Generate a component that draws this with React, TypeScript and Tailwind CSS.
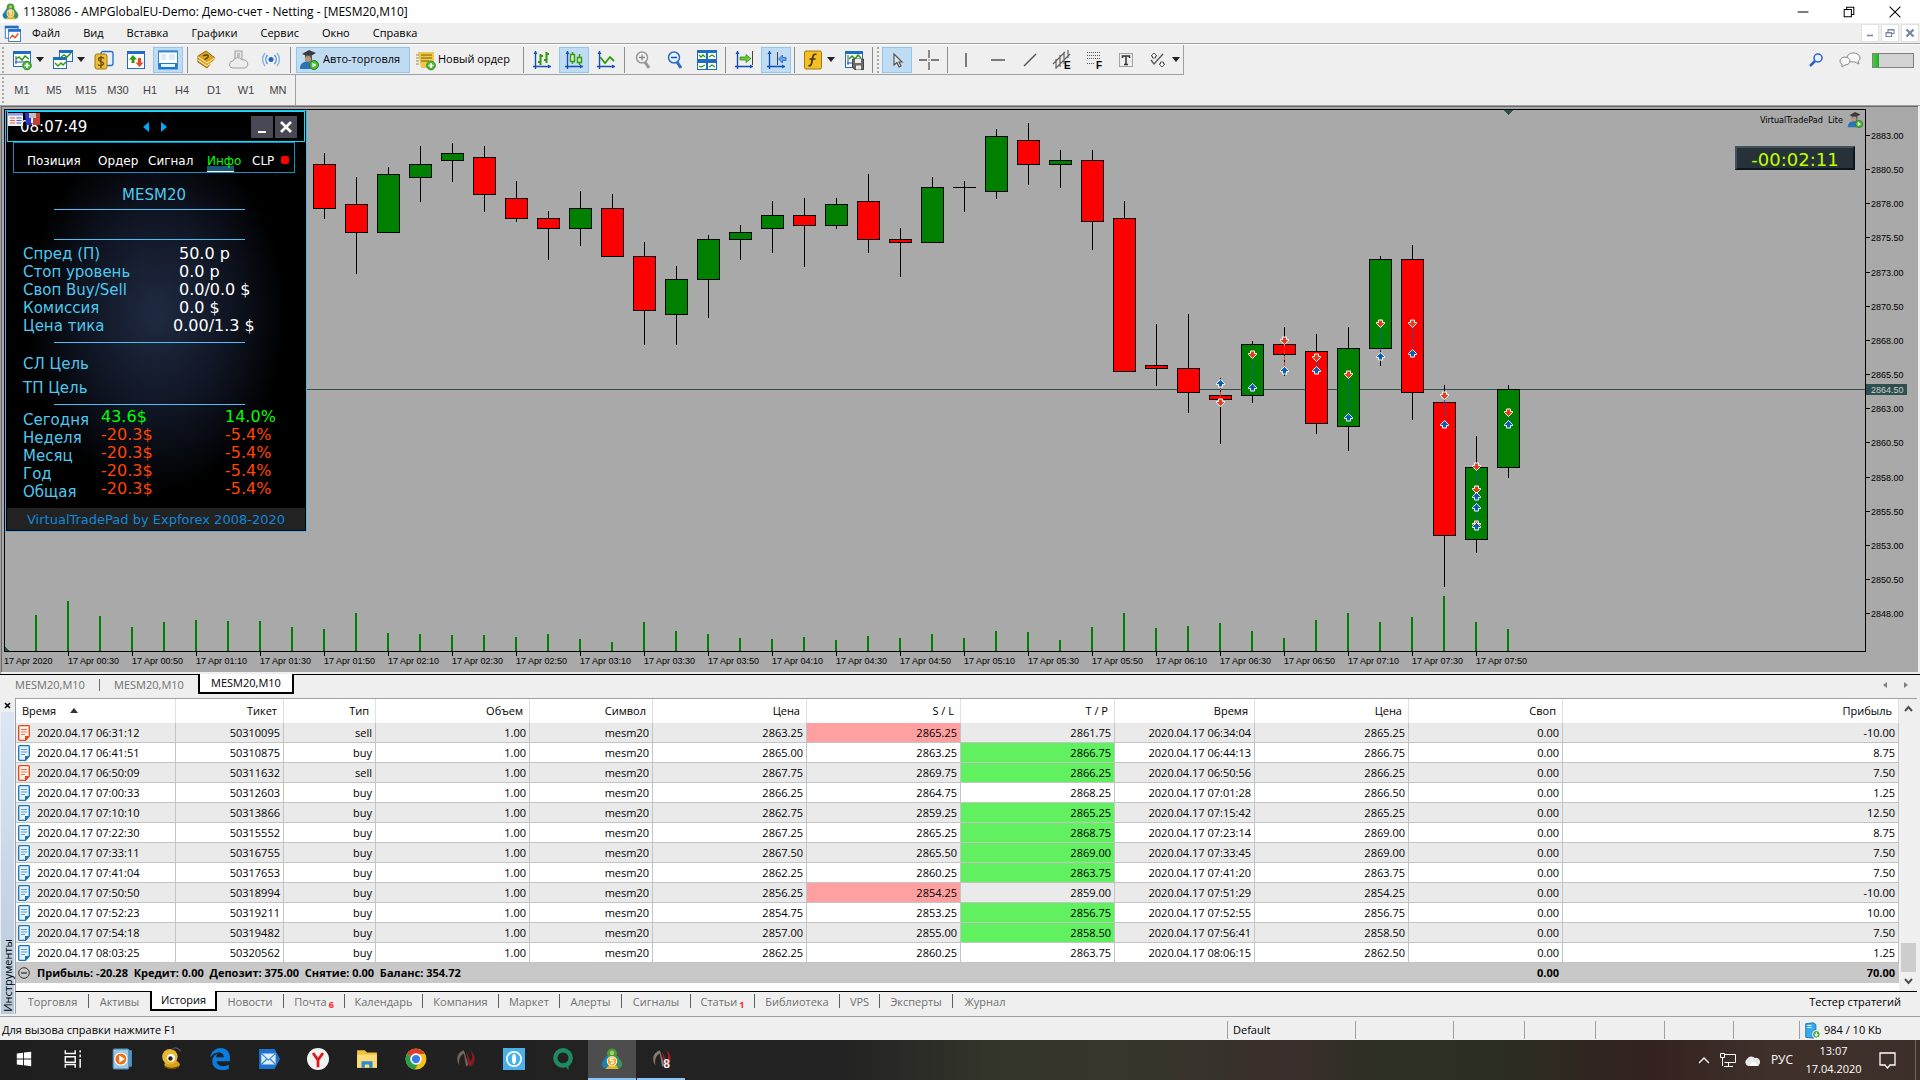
import React, { useState } from 'react';

type Candle = [number, number, number, number, 'r' | 'g'];

const FIRST_X = 324;
const STEP = 32;

// high, top, bottom, low, colour
const candles: Candle[] = [
  [153, 164, 209, 219, 'r'], [177, 204, 233, 274, 'r'], [167, 174, 233, 233, 'g'], [146, 164, 178, 202, 'g'],
  [143, 153, 161, 182, 'g'], [146, 157, 195, 212, 'r'], [181, 198, 219, 222, 'r'], [211, 218, 229, 260, 'r'],
  [191, 208, 229, 246, 'g'], [194, 208, 257, 257, 'r'], [242, 256, 311, 345, 'r'], [266, 279, 315, 345, 'g'],
  [235, 239, 280, 318, 'g'], [225, 232, 240, 260, 'g'], [201, 215, 229, 253, 'g'], [198, 215, 226, 267, 'r'],
  [198, 204, 226, 229, 'g'], [174, 201, 240, 253, 'r'], [228, 239, 243, 277, 'r'], [177, 187, 243, 243, 'g'],
  [181, 187, 188, 212, 'g'], [129, 136, 192, 199, 'g'], [123, 140, 165, 185, 'r'], [150, 160, 165, 188, 'g'],
  [150, 160, 222, 250, 'r'], [201, 218, 372, 372, 'r'], [324, 365, 369, 386, 'r'], [314, 368, 393, 413, 'r'],
  [378, 395, 400, 444, 'r'], [341, 344, 396, 403, 'g'], [327, 344, 355, 376, 'r'], [334, 351, 424, 434, 'r'],
  [327, 348, 427, 451, 'g'], [256, 259, 349, 366, 'g'], [245, 259, 393, 420, 'r'], [385, 402, 536, 587, 'r'],
  [436, 467, 540, 553, 'g'], [385, 389, 468, 478, 'g'],
];

const volumes = [
  615, 601, 616, 627, 622, 620, 621, 621, 627, 629, 613, 633, 634, 635, 635, 637, 634, 639, 642, 622, 631, 634, 638,
  639, 637, 640, 636, 638, 634, 638, 631, 632, 640, 627, 613, 628, 626, 623, 631, 638, 620, 613, 622, 617, 596, 622, 629,
];

// x, y, s = sell arrow (down), b = buy arrow (up)
const arrows: [number, number, 's' | 'b'][] = [
  [1220, 383, 'b'], [1220, 402, 's'], [1252, 354, 's'], [1252, 387, 'b'], [1284, 340, 's'], [1284, 370, 'b'],
  [1316, 357, 's'], [1316, 370, 'b'], [1348, 374, 's'], [1348, 417, 'b'], [1380, 323, 's'], [1380, 356, 'b'],
  [1412, 323, 's'], [1412, 353, 'b'], [1444, 395, 's'], [1444, 424, 'b'], [1476, 466, 's'], [1476, 489, 's'],
  [1476, 496, 'b'], [1476, 507, 'b'], [1476, 524, 's'], [1476, 526, 'b'], [1508, 412, 's'], [1508, 424, 'b'],
];

const links: [number, number, number, string][] = [
  [1220, 380, 407, '#e8481c'], [1252, 360, 382, '#0a5fb4'], [1284, 344, 366, '#e8481c'], [1316, 362, 366, '#0a5fb4'],
  [1348, 380, 412, '#0a5fb4'], [1380, 330, 351, '#0a5fb4'], [1412, 328, 348, '#0a5fb4'], [1444, 399, 419, '#0a5fb4'],
  [1476, 471, 522, '#0a5fb4'], [1508, 416, 419, '#0a5fb4'],
];

const timeLabels = Array.from({ length: 23 }, (_, i) => {
  const m = 30 + i * 20;
  return `17 Apr ${String(Math.floor(m / 60)).padStart(2, '0')}:${String(m % 60).padStart(2, '0')}`;
});

const deals = [
  ['2020.04.17 06:31:12', '50310095', 'sell', '2863.25', '2865.25', '2861.75', '2020.04.17 06:34:04', '2865.25', '-10.00', 'sl'],
  ['2020.04.17 06:41:51', '50310875', 'buy', '2865.00', '2863.25', '2866.75', '2020.04.17 06:44:13', '2866.75', '8.75', 'tp'],
  ['2020.04.17 06:50:09', '50311632', 'sell', '2867.75', '2869.75', '2866.25', '2020.04.17 06:50:56', '2866.25', '7.50', 'tp'],
  ['2020.04.17 07:00:33', '50312603', 'buy', '2866.25', '2864.75', '2868.25', '2020.04.17 07:01:28', '2866.50', '1.25', ''],
  ['2020.04.17 07:10:10', '50313866', 'buy', '2862.75', '2859.25', '2865.25', '2020.04.17 07:15:42', '2865.25', '12.50', 'tp'],
  ['2020.04.17 07:22:30', '50315552', 'buy', '2867.25', '2865.25', '2868.75', '2020.04.17 07:23:14', '2869.00', '8.75', 'tp'],
  ['2020.04.17 07:33:11', '50316755', 'buy', '2867.50', '2865.50', '2869.00', '2020.04.17 07:33:45', '2869.00', '7.50', 'tp'],
  ['2020.04.17 07:41:04', '50317653', 'buy', '2862.25', '2860.25', '2863.75', '2020.04.17 07:41:20', '2863.75', '7.50', 'tp'],
  ['2020.04.17 07:50:50', '50318994', 'buy', '2856.25', '2854.25', '2859.00', '2020.04.17 07:51:29', '2854.25', '-10.00', 'sl'],
  ['2020.04.17 07:52:23', '50319211', 'buy', '2854.75', '2853.25', '2856.75', '2020.04.17 07:52:55', '2856.75', '10.00', 'tp'],
  ['2020.04.17 07:54:18', '50319482', 'buy', '2857.00', '2855.00', '2858.50', '2020.04.17 07:56:41', '2858.50', '7.50', 'tp'],
  ['2020.04.17 08:03:25', '50320562', 'buy', '2862.25', '2860.25', '2863.75', '2020.04.17 08:06:15', '2862.50', '1.25', ''],
];

const bottomTabs = [
  { name: 'Торговля', w: 'w-[72px]' },
  { name: 'Активы', w: 'w-[61px]' },
  { name: 'История', w: 'w-[67px]' },
  { name: 'Новости', w: 'w-[67px]' },
  { name: 'Почта', w: 'w-[61px]', badge: '6' },
  { name: 'Календарь', w: 'w-[78px]' },
  { name: 'Компания', w: 'w-[76px]' },
  { name: 'Маркет', w: 'w-[61px]' },
  { name: 'Алерты', w: 'w-[62px]' },
  { name: 'Сигналы', w: 'w-[69px]' },
  { name: 'Статьи', w: 'w-[64px]', badge: '1' },
  { name: 'Библиотека', w: 'w-[85px]' },
  { name: 'VPS', w: 'w-[40px]' },
  { name: 'Эксперты', w: 'w-[73px]' },
  { name: 'Журнал', w: 'w-[64px]' },
];

const Svg = ({ children, size = 20 }: { children: React.ReactNode; size?: number }) => (
  <svg width={size} height={size} viewBox="0 0 20 20" fill="none" className="shrink-0 overflow-visible" aria-hidden="true">
    {children}
  </svg>
);

/* ---------- Toolbar icons ---------- */
const Plus = () => (
  <>
    <circle cx="15" cy="15.5" r="4.3" fill="#4fb83a" stroke="#2a8a1c" />
    <path d="M15 13v5M12.500 15.500h5" stroke="#fff" strokeWidth="1.600" />
  </>
);
const Win = ({ x = 1, y = 1, w = 18, h = 16 }) => (
  <>
    <rect x={x + 0.5} y={y + 0.5} width={w - 1} height={h - 1} fill="#fff" stroke="#1e6cc4" />
    <path d={`M${x} ${y + 1.5}h${w}`} stroke="#1e6cc4" strokeWidth="3" />
  </>
);
const AxisArrows = () => (
  <>
    <path d="M3.500 1v18M1 16.500h18" stroke="#1450b4" strokeWidth="1.400" />
    <path d="M1.500 4l2-3 2 3zM16 14.500l3 2-3 2z" fill="#1450b4" />
  </>
);
const icons: Record<string, React.ReactNode> = {
  newChart: <><Win /><path d="M4 6v8M3 12h13" stroke="#1450b4" /><path d="M4 9l3-2 3 3 3-4 4 3" stroke="#2e9a0c" strokeWidth="1.500" /><Plus /></>,
  profiles: <><Win x={6} y={0} w={14} h={12} /><Win x={0} y={7} w={14} h={12} /><path d="M2 13l3 3 3-3 2 2 3-3M8 7l3-2 3 2 4-4" stroke="#2e9a0c" strokeWidth="1.500" /></>,
  market: <><rect x="7" y="1.500" width="12" height="14" rx="2" fill="#e4f0fb" stroke="#1e6cc4" strokeWidth="1.300" /><rect x="1" y="4" width="12" height="15" rx="2" fill="#e8bd3a" stroke="#a87808" /><path d="M10 8.500c-1-1.500-5.500-1.500-5.500 1s5 1.500 5 4-4.500 2.500-5.500 1M7 6v12" stroke="#6d4a00" strokeWidth="1.300" /></>,
  navigator: <><Win h={18} /><path d="M7 5l4 4.500H8.500V13h-3V9.500H3z" fill="#2e9a0c" /><path d="M13.500 17l4-4.500H15V8h-3v4.500H9.500z" fill="#e8481c" /></>,
  toolbox: <><rect x=".5" y="1" width="19" height="18" fill="#fff" stroke="#3a86d0" /><path d="M0 1.500h20" stroke="#3a86d0" strokeWidth="2" /><path d="M3 5h5M3 7h5M3 9h5M11 5h6M11 7h6M11 9h6" stroke="#b8d8f0" /><rect x="1" y="13" width="18" height="6" fill="#1d78cf" /><rect x="3" y="14" width="14" height="3" fill="#e8f4fc" /></>,
  book: <><path d="M1 6l8-5 9 7-8 10-9-6z" fill="#d9a520" stroke="#94690a" /><path d="M1 7l9 6 8-5M1 10l9 6 8-6" stroke="#fff3c0" /><path d="M6 6c3-2 6-1 5 1s-3 1-3 3" stroke="#614400" strokeWidth="1.500" /></>,
  cloud: <><rect x="6" y="1" width="7" height="11" fill="#e6e6e6" stroke="#a0a0a0" /><path d="M8 4h3M8 6h3" stroke="#999" /><path d="M4 18a3.500 3.500 0 010-7 5 5 0 019-1 4 4 0 013 8z" fill="#ededed" stroke="#a0a0a0" /></>,
  radio: <><path d="M4 3a10 10 0 000 13M16 3a10 10 0 010 13" stroke="#8ab8e6" strokeWidth="1.500" /><path d="M6.500 5a7 7 0 000 9M13.500 5a7 7 0 010 9" stroke="#5a96d8" strokeWidth="1.500" /><circle cx="10" cy="9.500" r="2.500" fill="#1d62c4" /></>,
  auto: <><path d="M3 4l7-4 7 3-7 4z" fill="#3c3c3c" /><path d="M6 5v5c1 3 6 3 7 0V5z" fill="#555" /><circle cx="9" cy="9" r="3" fill="#b89878" /><path d="M1 19c0-6 4-8 8-7 4 0 6 3 6 7z" fill="#2c72b8" /><circle cx="15" cy="15" r="4.500" fill="#4fb83a" stroke="#22801a" /><path d="M13.500 12.500v5l4-2.500z" fill="#fff" /></>,
  order: <><path d="M2 2h16v10l-5 6H5z" fill="#edc84a" /><path d="M5 5h11M5 8h11M5 11h8" stroke="#7a5c00" /><path d="M0 5h3M0 8h3M0 11h3M0 14h3" stroke="#a58a3a" /><Plus /></>,
  bars: <><AxisArrows /><path d="M8.500 4v11M6 12h2.500M8.500 6H11M14.500 2v11M12 10h2.500M14.500 4H17" stroke="#2e9a0c" strokeWidth="2" /></>,
  candle: <><AxisArrows /><path d="M8.500 2v12M15.500 4v11" stroke="#2e9a0c" strokeWidth="1.400" /><path d="M6.500 4.500h4v7h-4zM13.500 7.500h4v5h-4z" fill="#d8efc8" stroke="#2e9a0c" strokeWidth="1.400" /></>,
  line: <><AxisArrows /><path d="M4 7l5 6 5-6 4 4" stroke="#2e9a0c" strokeWidth="1.800" /></>,
  zoomIn: <><circle cx="9" cy="7.500" r="5.500" fill="#f4f4f4" stroke="#989898" strokeWidth="1.500" /><path d="M6 7.500h6M9 4.500v6" stroke="#888" strokeWidth="1.300" /><path d="M12 12l4 6" stroke="#989898" strokeWidth="3" /></>,
  zoomOut: <><circle cx="9" cy="7.500" r="5.500" fill="#e6f2ff" stroke="#2a6cc8" strokeWidth="1.500" /><path d="M6 7.500h6" stroke="#1450b4" strokeWidth="1.500" /><path d="M12 12l4 6" stroke="#2a6cc8" strokeWidth="3" /></>,
  tiles: <><Win x={0} y={0} w={10} h={10} /><Win x={10} y={0} w={10} h={10} /><Win x={0} y={10} w={10} h={10} /><Win x={10} y={10} w={10} h={10} /><path d="M2 5l2 2 2-2 2 2M12 7l3-2 3 2M2 16l2 1 4-2M12 17l3-2 3 2" stroke="#2e9a0c" strokeWidth="1.300" /></>,
  shift: <><AxisArrows /><path d="M18.500 1v14" stroke="#444" /><path d="M6 7h6V4.500l5 4-5 4V10H6z" fill="#69c43e" stroke="#2e8a0c" strokeWidth=".7" /></>,
  autoScroll: <><AxisArrows /><path d="M11.500 2v13" stroke="#444" /><path d="M20 7.500h-3.500V5L12.500 9l4 4v-2.500H20z" fill="#6aa4ee" stroke="#1d5cc4" strokeWidth=".8" /></>,
  indicator: <><rect x="1.500" y="1" width="17" height="18" rx="1.500" fill="#f2c026" stroke="#a87808" /><path d="M13.500 4.500c-3-1-3.500 1-4 4l-1 5c-.4 2-1.500 2.500-3 2M6.500 9h6" stroke="#4a3200" strokeWidth="1.700" /></>,
  template: <><Win h={17} /><path d="M4 5v10M3 13h8" stroke="#1450b4" /><path d="M5 9l3-3 3 3 3-4 3 3" stroke="#2e9a0c" strokeWidth="1.500" /><path d="M8.500 9h11v10.500h-9l-2-2z" fill="#6b6b6b" stroke="#444" /><path d="M11 9h6v4h-6zM12 15.500h5v4h-5z" fill="#eee" /></>,
  cursor: <path d="M7 4v11l3-2.500 2 4.500 2-1-2-4h3z" fill="#e8e8e8" stroke="#555" strokeWidth="1.200" />,
  cross: <path d="M10 0v8M10 12v8M0 10h8M12 10h8M10 9.500v1" stroke="#555" strokeWidth="1.300" />,
  vline: <path d="M10 3v14" stroke="#555" strokeWidth="1.500" />,
  hline: <path d="M3 10h14" stroke="#555" strokeWidth="1.500" />,
  diag: <path d="M4 16L16 4" stroke="#555" strokeWidth="1.500" />,
  channel: <><path d="M1 14L13 2M4 18L18 4M4 9v10M8 5v12M12 2v12M16 0v8" stroke="#666" strokeWidth="1.200" /><text x="12" y="19" fontSize="10" fontWeight="700" fill="#000" fontFamily="Liberation Sans">E</text></>,
  fibo: <><path d="M3 2.500h14M3 5.500h14M3 8.500h14M3 13.500h8" stroke="#555" strokeDasharray="1 1" /><text x="12" y="19" fontSize="10" fontWeight="700" fill="#000" fontFamily="Liberation Sans">F</text></>,
  text: <><rect x="3.500" y="3.500" width="13" height="13" stroke="#555" strokeDasharray="1 1" /><path d="M6.500 8V6h7v2M10 6v8.500M8 14.500h4" stroke="#333" strokeWidth="1.500" /></>,
  shapes: <><path d="M3 6l3-3 3 3-1.500 0v2h-3V6zM11 14l3 3 3-3h-1.500v-2h-3v2z" stroke="#555" fill="#fff" /><path d="M3 10l3 4L15 4" stroke="#555" strokeWidth="1.300" /></>,
};

const Caret = () => (
  <svg width="8" height="5" viewBox="0 0 8 5" aria-hidden="true"><path d="M0 0h8L4 5z" fill="#222" /></svg>
);

function Tool({ icon, label, active, caret }: { icon: string; label: string; active?: boolean; caret?: boolean }) {
  return (
    <div className="flex h-[26px] shrink-0 items-center">
      <button
        aria-label={label}
        className={`mx-px flex h-[26px] w-[30px] items-center justify-center border ${
          active ? 'border-[#90c8f0] bg-[#c0dcf3]' : 'border-transparent'
        }`}
      >
        <Svg>{icons[icon]}</Svg>
      </button>
      {caret && (
        <button aria-label={`${label}: список`} className="-ml-[2px] mr-[2px] flex h-[26px] w-[9px] items-center justify-start">
          <Caret />
        </button>
      )}
    </div>
  );
}

const Sep = ({ wide }: { wide?: boolean }) => (
  <div className={`h-[26px] w-px shrink-0 bg-[#8c8c8c] ${wide ? 'mx-[3px]' : 'mx-[2px]'}`} />
);
const Grip = () => <div className="mx-[2px] h-[26px] w-0 shrink-0 border-l-2 border-dotted border-[#a8a8a8]" />;

const Mt5Logo = ({ size }: { size: number }) => (
  <Svg size={size}>
    <circle cx="10" cy="5" r="4.500" fill="#4f9a2e" />
    <path d="M6 6L1 13c-1 3 1 6 5 6l4-6z" fill="#1c7fb0" />
    <path d="M14 6l5 7c1 3-1 6-5 6l-4-6z" fill="#3f8f60" />
    <path d="M4 19h12l-2-3H7z" fill="#e0b428" />
    <circle cx="10" cy="4.500" r="2" fill="#9fd070" />
    <circle cx="10" cy="12" r="4.300" fill="#f0a818" stroke="#e8f0e0" />
    <path d="M12 9.500H8.800v2c3.500-.8 3.500 3 0 2.600" stroke="#fff" strokeWidth="1.200" />
  </Svg>
);

function TitleBar() {
  return (
    <header className="flex h-[23px] shrink-0 items-center bg-white pr-[2px] pl-[2px]">
      <Mt5Logo size={17} />
      <h1 className="ml-1 flex-1 text-[12px] leading-[18px] text-black">
        1138086 - AMPGlobalEU-Demo: Демо-счет - Netting - [MESM20,M10]
      </h1>
      <button aria-label="Свернуть" className="flex h-5 w-[46px] items-center justify-center">
        <Svg size={12}><path d="M1 10h18" stroke="#000" strokeWidth="1.700" /></Svg>
      </button>
      <button aria-label="Восстановить" className="flex h-5 w-[46px] items-center justify-center">
        <Svg size={12}><path d="M2 6h12v12H2zM6 6V2h12v12h-4" stroke="#000" strokeWidth="1.700" /></Svg>
      </button>
      <button aria-label="Закрыть" className="flex h-5 w-[46px] items-center justify-center">
        <Svg size={12}><path d="M1 1l18 18M19 1L1 19" stroke="#000" strokeWidth="1.700" /></Svg>
      </button>
    </header>
  );
}

function MenuBar() {
  return (
    <nav className="flex h-[21px] shrink-0 items-center border-b border-[#a0a0a0] bg-[#efefef] pl-1">
      <Svg size={17}>
        <Win x={1} y={1} w={16} h={15} />
        <Win x={5} y={5} w={15} h={15} />
        <path d="M7 16l3-4 3 3 4-5" stroke="#e8481c" strokeWidth="1.500" />
      </Svg>
      <div className="ml-[11px] flex flex-1 gap-[23px] text-[11px] leading-[16px] text-black">
        {['Файл', 'Вид', 'Вставка', 'Графики', 'Сервис', 'Окно', 'Справка'].map((m) => (
          <button key={m}>{m}</button>
        ))}
      </div>
      <div className="flex gap-[2px] pr-px">
        <button aria-label="Свернуть окно" className="flex h-[18px] w-[18px] items-center justify-center border border-[#e2e2e2] bg-white">
          <Svg size={10}><path d="M4 15h12" stroke="#76869a" strokeWidth="3" /></Svg>
        </button>
        <button aria-label="Восстановить окно" className="flex h-[18px] w-[18px] items-center justify-center border border-[#e2e2e2] bg-white">
          <Svg size={10}><path d="M2 9h11v8H2zM6 8V3h12v8h-4M2 10h11M6 4h12" stroke="#76869a" strokeWidth="2.200" /></Svg>
        </button>
        <button aria-label="Закрыть окно" className="flex h-[18px] w-[18px] items-center justify-center border border-[#e2e2e2] bg-white">
          <Svg size={10}><path d="M3 3l14 14M17 3L3 17" stroke="#76869a" strokeWidth="4.500" /></Svg>
        </button>
      </div>
    </nav>
  );
}

function Toolbar() {
  return (
    <div className="flex h-[31px] shrink-0 items-start border-t border-white bg-[#efefef]">
      <div className="flex h-[30px] items-center border-r border-b border-[#a0a0a0]">
        <Grip />
        <Tool icon="newChart" label="Новый график" caret />
        <Tool icon="profiles" label="Профили" caret />
        <Tool icon="market" label="Обзор рынка" />
        <Tool icon="navigator" label="Навигатор" />
        <Tool icon="toolbox" label="Инструменты" active />
        <Sep wide />
        <Tool icon="book" label="MetaEditor" />
        <Tool icon="cloud" label="Облако" />
        <Tool icon="radio" label="Сигналы" />
        <Sep wide />
        <button className="mx-[2px] flex h-[26px] w-[114px] items-center gap-1 border border-[#90c8f0] bg-[#c0dcf3] px-[2px] text-[11px] whitespace-nowrap text-black">
          <Svg>{icons.auto}</Svg>
          Авто-торговля
        </button>
        <button className="mx-[2px] flex h-[26px] w-[105px] items-center gap-[2px] px-[2px] text-[11px] whitespace-nowrap text-black">
          <Svg>{icons.order}</Svg>
          Новый ордер
        </button>
        <Sep />
        <Tool icon="bars" label="Бары" />
        <Tool icon="candle" label="Свечи" active />
        <Tool icon="line" label="Линия" />
        <Sep />
        <Tool icon="zoomIn" label="Увеличить" />
        <Tool icon="zoomOut" label="Уменьшить" />
        <Tool icon="tiles" label="Мозаика" />
        <Sep />
        <Tool icon="shift" label="Автопрокрутка" />
        <Tool icon="autoScroll" label="Сдвиг графика" active />
        <Sep />
        <Tool icon="indicator" label="Индикаторы" caret />
        <Tool icon="template" label="Шаблоны" />
        <Sep />
        <Grip />
        <Tool icon="cursor" label="Курсор" active />
        <Tool icon="cross" label="Перекрестие" />
        <Sep />
        <Tool icon="vline" label="Вертикальная линия" />
        <Tool icon="hline" label="Горизонтальная линия" />
        <Tool icon="diag" label="Трендовая линия" />
        <Tool icon="channel" label="Канал" />
        <Tool icon="fibo" label="Фибоначчи" />
        <Tool icon="text" label="Текст" />
        <Tool icon="shapes" label="Объекты" caret />
      </div>
      <div className="ml-auto flex h-[30px] items-center pr-[6px]">
        <button aria-label="Поиск" className="mr-4">
          <svg width="14" height="14" viewBox="0 0 14 14" fill="none"><circle cx="9" cy="5" r="4" fill="#e6f2ff" stroke="#2a5fd0" strokeWidth="1.500" /><path d="M6 8l-5 5" stroke="#2a5fd0" strokeWidth="2.500" /></svg>
        </button>
        <button aria-label="Чат" className="mr-[11px]">
          <svg width="22" height="16" viewBox="0 0 22 16" fill="#f8f8f8" stroke="#888"><path d="M14 1c4 0 7 2 7 5 0 2-1 3-2 3l1 3-4-2c-5 0-8-1-8-4s3-5 6-5z" /><path d="M6 5c3 0 5 2 5 4s-2 4-5 4l-3 2v-3c-1 0-2-1-2-3s2-4 5-4z" /></svg>
        </button>
        <div className="h-[15px] w-[42px] border border-[#808080] bg-[#d2d2d2]">
          <div className="h-full w-[6px] bg-gradient-to-r from-[#45d33f] to-[#2fa52c]" />
        </div>
      </div>
    </div>
  );
}

function Timeframes() {
  return (
    <div className="flex h-[30px] shrink-0 bg-[#efefef]">
      <div className="flex items-center border-r border-[#a0a0a0] pr-px">
        <Grip />
        {['M1', 'M5', 'M15', 'M30', 'H1', 'H4', 'D1', 'W1', 'MN'].map((t) => (
          <button key={t} className="h-6 w-8 text-center font-['Liberation_Sans',sans-serif] text-[11px] text-[#444]">
            {t}
          </button>
        ))}
      </div>
    </div>
  );
}

/* ---------- Chart ---------- */
function Plot() {
  return (
    <svg className="absolute inset-0 h-full w-full" shapeRendering="crispEdges">
      <g transform="translate(-5,-110)">
        <path d="M5 389.500H3840" stroke="#2f4f4f" />
        <path d="M1503 110h11l-5.500 5z" fill="#2f4f4f" />
        <path d="M5 651v-4l4 4z" fill="#2f4f4f" />
        {volumes.map((y, i) => (
          <rect key={i} x={35 + i * STEP} y={y} width="2" height={651 - y} fill="#008000" />
        ))}
        {candles.map(([hi, top, bot, lo, c], i) => {
          const x = FIRST_X + i * STEP;
          return (
            <g key={i} stroke="#000">
              <path d={`M${x + 0.5} ${hi}V${lo}`} />
              {bot - top > 1 ? (
                <rect x={x - 10.5} y={top + 0.5} width="22" height={bot - top - 1} fill={c === 'r' ? '#f00' : '#008000'} />
              ) : (
                <path d={`M${x - 11} ${top + 0.5}h23`} />
              )}
            </g>
          );
        })}
        {links.map(([x, a, b, c], i) => (
          <path key={i} d={`M${x + 0.5} ${a}V${b}`} stroke={c} strokeDasharray="4 2" />
        ))}
        {arrows.map(([x, y, t], i) => (
          <path
            key={i}
            transform={`translate(${x + 0.5},${y + 0.5})${t === 's' ? ' scale(1,-1)' : ''}`}
            d="M0 -4L4 0V1H2V3.500H-2V1H-4V0z"
            fill={t === 's' ? '#e0401c' : '#0a5fb4'}
            stroke="#fff"
            shapeRendering="auto"
          />
        ))}
      </g>
    </svg>
  );
}

function PriceAxis() {
  return (
    <svg className="h-full w-[52px] shrink-0 font-['Liberation_Sans',sans-serif] text-[9px]">
      {Array.from({ length: 15 }, (_, i) => {
        const y = 26 + Math.round(i * 34.15);
        return (
          <g key={i}>
            <path d={`M0 ${y + 0.5}h4`} stroke="#000" />
            <text x="5" y={y + 4}>{(2883 - i * 2.5).toFixed(2)}</text>
          </g>
        );
      })}
      <rect x="0" y="275" width="41" height="11" fill="#2f4f4f" />
      <text x="5" y="284" fill="#c8d0d0">2864.50</text>
    </svg>
  );
}

const panelRows = [
  ['Спред (П)', '50.0 p'],
  ['Стоп уровень', '0.0 p'],
  ['Своп Buy/Sell', '0.0/0.0 $'],
  ['Комиссия', '0.0 $'],
];

function TradePad() {
  const rule = 'ml-12 h-px w-[191px] bg-[#4cc0f5]';
  return (
    <aside className="absolute top-0 left-0 flex h-[422px] w-[302px] flex-col border border-[#4cb4f0] bg-black font-['DejaVu_Sans',sans-serif]">
      <div className="relative mx-px flex h-[31px] shrink-0 items-center border border-[#00e5ff] pl-[12px]">
        <span className="text-[15px] leading-[18px] text-white">08:07:49</span>
        <div className="absolute top-px left-0 flex gap-[2px]">
          <svg width="15" height="13" viewBox="0 0 15 13"><rect width="15" height="13" fill="#eee" /><path d="M0 1h15" stroke="#8898e8" strokeWidth="3" /><path d="M2 5h5M2 7.500h5M2 10h5" stroke="#f06050" /><path d="M8.500 5h5M8.500 7.500h5M8.500 10h5" stroke="#4860d8" /></svg>
          <svg width="15" height="13" viewBox="0 0 15 13"><path d="M0 0h7v12H1z" fill="#2a35c8" /><path d="M8 0h7v12H8z" fill="#c04038" /><path d="M4 0h7v5H4z" fill="#c0c0c0" /><path d="M7 5v5" stroke="#eee" strokeWidth="2" /></svg>
        </div>
        <div className="absolute left-[135px] flex gap-[12px]">
          <button aria-label="Назад"><svg width="6" height="10"><path d="M6 0v10L0 5z" fill="#00aaff" /></svg></button>
          <button aria-label="Вперёд"><svg width="6" height="10"><path d="M0 0v10l6-5z" fill="#00aaff" /></svg></button>
        </div>
        <div className="ml-auto flex gap-[2px] pr-[7px]">
          <button aria-label="Свернуть панель" className="flex h-[22px] w-[22px] items-center justify-center bg-[#494955]">
            <svg width="12" height="12"><path d="M2 11h8" stroke="#fff" strokeWidth="2" /></svg>
          </button>
          <button aria-label="Закрыть панель" className="flex h-[22px] w-[22px] items-center justify-center bg-[#494955]">
            <svg width="12" height="12"><path d="M1 1l10 10M11 1L1 11" stroke="#fff" strokeWidth="2.600" /></svg>
          </button>
        </div>
      </div>
      <div className="ml-[7px] flex h-[31px] w-[282px] shrink-0 items-end border border-[#0e8fc8] pl-[13px] text-[12px] leading-[18px] text-white">
        <button className="h-[22px] w-[71px] pb-px text-left">Позиция</button>
        <button className="h-[22px] w-[50px] pb-px text-left">Ордер</button>
        <button className="h-[22px] w-[59px] pb-px text-left">Сигнал</button>
        <button className="relative h-[22px] w-[45px] pb-px text-left text-[#00ff00]">
          <span className="absolute bottom-0 left-0 h-[6px] w-[27px] border-b border-white bg-[#1f6f92]/80" />
          <span className="relative">Инфо</span>
        </button>
        <button className="h-[22px] w-[29px] pb-px text-left">CLP</button>
        <span className="mb-2 h-2 w-2 rounded-[2px] bg-[#ff0000]" />
      </div>
      <div className="flex flex-1 flex-col bg-[radial-gradient(ellipse_130px_180px_at_50%_42%,#1f2a42,#0e1320_60%,#000)]">
        <h2 className="flex h-9 items-center justify-center pt-[9px] pr-1 text-[15px] text-[#4fc8ee]">MESM20</h2>
        <div className={rule} />
        <div className={`${rule} mt-[29px]`} />
        <dl className="mt-[5px] pl-[17px] text-[15px] leading-[18px]">
          {panelRows.map(([k, v]) => (
            <div key={k} className="flex">
              <dt className="w-[156px] text-[#4fc8ee]">{k}</dt>
              <dd className="text-[16px] text-white">{v}</dd>
            </div>
          ))}
          <div className="flex">
            <dt className="w-[150px] text-[#4fc8ee]">Цена тика</dt>
            <dd className="text-[16px] text-white">0.00/1.3 $</dd>
          </div>
        </dl>
        <div className={`${rule} mt-[7px]`} />
        <div className="mt-[9px] pl-[17px] text-[15px] leading-[24px] text-[#4fc8ee]">
          <p>СЛ Цель</p>
          <p>ТП Цель</p>
        </div>
        <div className={`${rule} mt-1`} />
        <div className="mt-[3px] flex pl-[17px] text-[16px] leading-[18px] text-[#ff4500]">
          <div className="w-[78px] pt-[3px] text-[15px] text-[#4fc8ee]">
            {['Сегодня', 'Неделя', 'Месяц', 'Год', 'Общая'].map((t) => <p key={t}>{t}</p>)}
          </div>
          <div className="w-[124px]">
            <p className="text-[#00ff00]">43.6$</p>
            <p>-20.3$</p><p>-20.3$</p><p>-20.3$</p><p>-20.3$</p>
          </div>
          <div>
            <p className="text-[#00ff00]">14.0%</p>
            <p>-5.4%</p><p>-5.4%</p><p>-5.4%</p><p>-5.4%</p>
          </div>
        </div>
      </div>
      <footer className="mx-px mb-px flex h-[22px] items-center justify-center bg-[#222] pt-px text-[13px] whitespace-nowrap text-[#1088d8]">
        VirtualTradePad by Expforex 2008-2020
      </footer>
    </aside>
  );
}

function Chart() {
  return (
    <section className="flex min-h-0 flex-1 flex-col border-t border-l border-[#a0a0a0] bg-[#efefef] pr-[2px] pb-[2px]">
      <div className="flex min-h-0 flex-1 flex-col border-t border-l border-[#696969] bg-[#a9a9a9] pt-[2px] pl-[2px]">
        <div className="flex min-h-0 flex-1">
          <div className="relative flex-1 overflow-hidden border border-black">
            <Plot />
            <TradePad />
            <div className="absolute top-0 right-[2px] flex items-center gap-1 font-['DejaVu_Sans_Condensed','DejaVu_Sans',sans-serif] text-[9px] leading-[20px] text-black">
              <span className="whitespace-pre">VirtualTradePad  Lite</span>
              <Svg size={16}>{icons.auto}</Svg>
            </div>
            <div className="absolute top-9 right-[10px] flex h-6 w-[120px] items-center justify-center border-2 border-t-[#42525a] border-r-[#0b171c] border-b-[#0b171c] border-l-[#42525a] bg-[#263238] pt-[2px] font-['DejaVu_Sans',sans-serif] text-[18px] text-[#c0ff00]">
              -00:02:11
            </div>
          </div>
          <PriceAxis />
        </div>
        <svg className="h-5 w-full shrink-0 font-['Liberation_Sans',sans-serif] text-[9px]">
          <text x="0" y="12">17 Apr 2020</text>
          {timeLabels.map((t, i) => (
            <g key={t}>
              <path d={`M${64.5 + i * 64} 0v4`} stroke="#000" />
              <text x={64 + i * 64} y="12">{t}</text>
            </g>
          ))}
        </svg>
      </div>
    </section>
  );
}

function ChartTabs() {
  return (
    <div className="flex h-[21px] shrink-0 border-t border-black bg-[#efefef] text-[11px] text-[#707070]">
      <button className="my-1 ml-px w-[99px] border-r border-[#707070] leading-[12px]">MESM20,M10</button>
      <button className="w-[98px] leading-[18px]">MESM20,M10</button>
      <button className="-mt-px h-[20px] w-[96px] border-x-2 border-b-2 border-black bg-white leading-[16px] text-black">MESM20,M10</button>
      <div className="ml-auto flex items-center gap-[17px] pr-3">
        <button aria-label="Влево"><svg width="4" height="6"><path d="M4 0v6L0 3z" fill="#808080" /></svg></button>
        <button aria-label="Вправо"><svg width="4" height="6"><path d="M0 0v6l4-3z" fill="#808080" /></svg></button>
      </div>
    </div>
  );
}

/* ---------- Toolbox ---------- */
const DocIcon = ({ sell }: { sell: boolean }) => (
  <svg width="12" height="16" viewBox="0 0 12 16" className="mr-[7px] shrink-0" aria-hidden="true">
    <path d="M1.500.7h9a.8.8 0 01.8.8V11L7.500 15.300H1.500a.8.8 0 01-.8-.8v-13a.8.8 0 01.8-.8z" fill={sell ? '#fff0e8' : '#e4f2fc'} stroke={sell ? '#e04818' : '#1a74b4'} strokeWidth="1.300" />
    <path d="M3 4.500h6M3 7h6M3 9.500h4" stroke={sell ? '#e87850' : '#5a9fd4'} />
    <path d="M7 15.500V11h4.500z" fill={sell ? '#e04818' : '#1a74b4'} />
  </svg>
);

const columns = [
  ['Время', 'w-[160px]'], ['Тикет', 'w-[108px]'], ['Тип', 'w-[92px]'], ['Объем', 'w-[154px]'], ['Символ', 'w-[123px]'],
  ['Цена', 'w-[154px]'], ['S / L', 'w-[154px]'], ['T / P', 'w-[154px]'], ['Время', 'w-[140px]'], ['Цена', 'w-[154px]'],
  ['Своп', 'w-[154px]'], ['Прибыль', ''],
];

function History() {
  const cell = 'border-r border-b border-[#c4c4c4] pr-[3px] text-right';
  return (
    <table className="w-full table-fixed border-separate border-spacing-0 text-[11px] leading-[18px] text-black">
      <thead>
        <tr className="h-6">
          {columns.map(([name, w], i) => (
            <th key={i} className={`${w} border-r border-[#e0e0e0] font-normal ${i === 0 ? 'pl-[6px] text-left' : 'pr-[6px] text-right'}`}>
              {name}
              {i === 0 && (
                <svg width="8" height="5" className="mb-[3px] ml-[14px] inline-block align-middle"><path d="M0 5l4-5 4 5z" fill="#333" /></svg>
              )}
            </th>
          ))}
        </tr>
      </thead>
      <tbody>
        {deals.map((d, i) => (
          <tr key={d[1]} className={`h-5 ${i % 2 ? 'bg-white' : 'bg-[#eaeaea]'}`}>
            <td className="border-r border-b border-[#c4c4c4] pl-[2px]">
              <span className="flex items-center"><DocIcon sell={d[2] === 'sell'} />{d[0]}</span>
            </td>
            <td className={cell}>{d[1]}</td>
            <td className={cell}>{d[2]}</td>
            <td className={cell}>1.00</td>
            <td className={cell}>mesm20</td>
            <td className={cell}>{d[3]}</td>
            <td className={`${cell} ${d[9] === 'sl' ? 'bg-[#ffa0a0]' : ''}`}>{d[4]}</td>
            <td className={`${cell} ${d[9] === 'tp' ? 'bg-[#60f060]' : ''}`}>{d[5]}</td>
            <td className={cell}>{d[6]}</td>
            <td className={cell}>{d[7]}</td>
            <td className={cell}>0.00</td>
            <td className={cell}>{d[8]}</td>
          </tr>
        ))}
      </tbody>
      <tfoot>
        <tr className="h-5 bg-[#c8c8c8] font-bold">
          <td colSpan={10} className="pl-[2px] whitespace-pre">
            <span className="flex items-center gap-[7px]">
              <svg width="12" height="12" viewBox="0 0 12 12" fill="none" stroke="#333"><circle cx="6" cy="6" r="5.300" /><path d="M3 6h6" strokeWidth="1.300" /></svg>
              Прибыль: -20.28  Кредит: 0.00  Депозит: 375.00  Снятие: 0.00  Баланс: 354.72
            </span>
          </td>
          <td className="pr-1 text-right">0.00</td>
          <td className="pr-1 text-right">70.00</td>
        </tr>
      </tfoot>
    </table>
  );
}

function Toolbox() {
  const [tab, setTab] = useState('История');

  return (
    <section className="flex shrink-0 bg-[#efefef] pt-[3px] pb-[2px]">
      <div className="flex w-[15px] shrink-0 flex-col">
        <button aria-label="Закрыть инструменты" className="flex h-[14px] items-center justify-center">
          <svg width="7" height="7"><path d="M1 1l5 5M6 1L1 6" stroke="#000" strokeWidth="1.600" /></svg>
        </button>
        <div className="mr-px ml-px flex flex-1 items-end justify-center bg-gradient-to-b from-[#dbe7f4] to-[#b8cadd] pb-[2px]">
          <span className="rotate-180 text-[11px] leading-[12px] text-black [writing-mode:vertical-rl]">Инструменты</span>
        </div>
      </div>
      <div className="flex min-w-0 flex-1 flex-col">
        <div className="mr-[3px] flex h-[293px] border-t border-l border-[#a0a0a0] bg-white">
          <div className="min-w-0 flex-1">
            <History />
          </div>
          <div className="flex w-[18px] flex-col items-center bg-[#f0f0f0] py-[6px]">
            <svg width="9" height="7" fill="none"><path d="M1 6l3.500-4L8 6" stroke="#505050" strokeWidth="2" /></svg>
            <div className="mt-auto mb-[6px] h-[29px] w-[15px] bg-[#cdcdcd]" />
            <svg width="9" height="7" fill="none"><path d="M1 1l3.500 4L8 1" stroke="#505050" strokeWidth="2" /></svg>
          </div>
        </div>
        <div className="mr-[3px] flex h-[23px] items-start border-t border-l border-black border-l-[#a0a0a0] pl-px text-[11px] text-[#707070]">
          {bottomTabs.map((t, i) => (
            <button
              key={t.name}
              onClick={() => setTab(t.name)}
              className={`${t.w} shrink-0 whitespace-nowrap ${
                t.name === tab
                  ? '-mt-px h-[20px] border-x-2 border-b-2 border-black bg-white leading-[18px] text-black'
                  : `mt-[2px] h-[14px] leading-[13px] ${
                      bottomTabs[i + 1] && bottomTabs[i + 1].name !== tab ? 'border-r border-[#606060]' : ''
                    }`
              }`}
            >
              {t.name}
              {t.badge && <sub className="ml-[2px] text-[9px] font-bold text-[#ff2020]">{t.badge}</sub>}
            </button>
          ))}
          <button className="mt-[2px] mr-[16px] ml-auto leading-[16px] text-black">Тестер стратегий</button>
        </div>
      </div>
    </section>
  );
}

function StatusBar() {
  const field = 'h-[18px] shrink-0 border-l border-[#a0a0a0]';
  return (
    <div className="flex h-6 shrink-0 items-end border-t border-[#a0a0a0] bg-[#efefef] pb-px text-[11px] leading-[18px] text-black">
      <p className="flex-1 pl-[2px]">Для вызова справки нажмите F1</p>
      <div className={`${field} w-[128px] pl-[5px]`}>Default</div>
      <div className={`${field} w-[98px]`} />
      <div className={`${field} w-[71px]`} />
      <div className={`${field} w-[71px]`} />
      <div className={`${field} w-[69px]`} />
      <div className={`${field} w-[69px]`} />
      <div className={`${field} w-[66px]`} />
      <div className={`${field} flex w-[121px] items-center gap-[3px] pl-1`}>
        <Svg size={17}>
          <path d="M2 2l9-1 3 2v14l-3 2-9-1z" fill="#3aa8ee" stroke="#1470b4" />
          <path d="M4 4h5M4 6.500h5" stroke="#fff" />
          <circle cx="14.500" cy="14.500" r="4.500" fill="#4fa83a" stroke="#fff" />
          <path d="M14.500 12v4M12.500 14.500l2 2 2-2" stroke="#fff" strokeWidth="1.300" />
        </Svg>
        984 / 10 Kb
      </div>
    </div>
  );
}

/* ---------- Taskbar ---------- */
const Wing = () => (
  <>
    <path d="M9 2C3 4 1 10 5 16c-1-5 0-9 4-11l2 12 2-2z" fill="#8c7868" />
    <path d="M11 3l2 12 2 2c5-4 5-11 0-15 2 5 2 8 0 10z" fill="#a81820" />
  </>
);

const apps: { name: string; icon: React.ReactNode; state?: string }[] = [
  { name: 'Пуск', icon: <path d="M2 4l7-1v6.500H2zM10 2.800L18 2v7.500h-8zM2 10.500h7V17l-7-1zM10 10.500h8V18l-8-1z" fill="#fff" /> },
  { name: 'Представление задач', icon: <path d="M3 2v3h9V2M3 8h9v5H3zM3 18v-3h9v3M16.500 2v2M16.500 10v8M16.500 6v2.500" stroke="#fff" strokeWidth="1.300" /> },
  { name: 'Проигрыватель', icon: <><rect x="5" y="2" width="14" height="15" fill="#4a96c8" /><rect x="2" y="1" width="14" height="18" rx="1" fill="#9cc8e4" stroke="#5a94b8" /><circle cx="9" cy="10" r="5.500" fill="#f07018" stroke="#fff" /><path d="M7.500 6.500v7l5-3.500z" fill="#fff" /></> },
  { name: 'Пчела', icon: <><ellipse cx="11" cy="15" rx="7" ry="4" fill="#d8a018" /><circle cx="9" cy="8" r="7" fill="#e8b830" /><circle cx="10" cy="9" r="3.500" fill="#fff" /><circle cx="9.500" cy="9.500" r="2" fill="#222" /><path d="M11 2c1-3 5-3 8 1" stroke="#555" /><path d="M4 17c4 2 9 2 13 0" stroke="#6d4a00" strokeWidth="1.300" /></> },
  { name: 'Edge', icon: <path d="M1 9C2 3 6 0 11 0c5 0 8 4 8 8.500V12H7c0 3 3 4.500 6 4.500 2 0 3.500-.5 5-1.300V19c-2 .8-4 1-6 1-5 0-9-3-9-8 0-3 2-6 5-7-1 1-1.500 2.500-1.500 3.500h7C13.500 6 12 4 9 4 5.500 4 2.500 6 1 9z" fill="#0a7ce0" /> },
  { name: 'Почта', icon: <><path d="M1 1h14l5 9-5 9H1z" fill="#1d74d0" /><rect x="3" y="5" width="13" height="10" fill="#dcecf8" /><path d="M3 5l6.500 6L16 5M3 15l5-5M16 15l-5-5" stroke="#3a88d0" /></> },
  { name: 'Яндекс', icon: <><circle cx="10" cy="10" r="10" fill="#f2f2f2" /><path d="M5.500 4.500L10 11l4.500-6.500M10 11v6.500" stroke="#e01818" strokeWidth="2.500" /></> },
  { name: 'Проводник', icon: <><path d="M1 2h7l2 2h9v14H1z" fill="#f0c038" /><path d="M1 6h18v12H1z" fill="#fadc78" /><path d="M5 18v-6h10v6h-3v-3H8v3z" fill="#2a8ad4" /></> },
  { name: 'Chrome', icon: <><circle cx="10" cy="10" r="9.500" fill="#f2c018" /><path d="M10 10L1.800 5.200A9.500 9.500 0 0118.200 5.500H10z" fill="#e03c2c" /><path d="M10 10L1.800 5.200A9.500 9.500 0 009 19.500l4-7z" fill="#2c9c48" /><circle cx="10" cy="10" r="4.500" fill="#3a7ce8" stroke="#fff" strokeWidth="1.500" /></> },
  { name: 'Ninja', icon: <g opacity=".8"><Wing /></g> },
  { name: 'Опера', icon: <><rect width="20" height="20" fill="#4ab0e8" /><circle cx="10" cy="10" r="6.500" stroke="#fff" strokeWidth="1.500" /><ellipse cx="10" cy="10" rx="1.800" ry="4.500" fill="#fff" /></> },
  { name: 'Quik', icon: <><circle cx="10" cy="9" r="7" stroke="#1f8a62" strokeWidth="4" /><path d="M9 13l6 2v5z" fill="#1f8a62" /></> },
  { name: 'MetaTrader', icon: null, state: 'active' },
  { name: 'Ninja 8', icon: <><Wing /><text x="12" y="18" fontSize="11" fontWeight="700" fill="#eee" fontFamily="Liberation Sans">8</text></>, state: 'open' },
];

function Taskbar() {
  return (
    <footer className="flex h-10 shrink-0 items-center bg-[linear-gradient(90deg,#1e1e1e,#232323_44%,#34352a_52%,#37372c_58%,#382e2b_67%,#2d3022_73%,#2c2d23_78%,#33221f_86%,#40302a_92%,#3c2f29)] text-[11px] text-white">
      {apps.map((a) => (
        <button
          key={a.name}
          aria-label={a.name}
          className={`mr-px flex h-10 w-12 shrink-0 items-center justify-center border-b-2 ${
            a.state === 'active' ? 'border-[#8cc4f4] bg-[#4d4d4d]' : a.state === 'open' ? 'border-[#8cc4f4]' : 'border-transparent'
          }`}
        >
          {a.icon ? <Svg size={a.name === 'Пуск' ? 18 : 22}>{a.icon}</Svg> : <Mt5Logo size={22} />}
        </button>
      ))}
      <div className="ml-auto flex h-10 items-center">
        <button aria-label="Скрытые значки" className="flex w-6 justify-center">
          <svg width="12" height="8" fill="none"><path d="M1 7l5-5 5 5" stroke="#fff" strokeWidth="1.300" /></svg>
        </button>
        <button aria-label="Сеть" className="flex w-6 justify-center">
          <svg width="16" height="14" fill="none" stroke="#fff"><path d="M4.500 1.500h11v8h-11M4 13.500h9M8.500 9.500v4M.5.500h4v4h-4zM2.500 5v8" /></svg>
        </button>
        <button aria-label="OneDrive" className="flex w-6 justify-center">
          <svg width="16" height="11"><path d="M4 11a4 4 0 01-1-7 5 5 0 018-1 4 4 0 012 8z" fill="#e8e8e8" /><path d="M6 11c0-4 4-5 6-3l3 3z" fill="#fff" /></svg>
        </button>
        <button className="flex w-9 justify-center text-[12px]">РУС</button>
        <div className="w-[67px] text-center leading-[18px]">
          <p>13:07</p>
          <p>17.04.2020</p>
        </div>
        <button aria-label="Уведомления" className="flex w-[41px] justify-center">
          <svg width="17" height="17" fill="none"><path d="M1 1h15v12h-5l-2.500 3L6 13H1z" stroke="#fff" strokeWidth="1.300" /></svg>
        </button>
        <div className="ml-[7px] h-10 w-[5px] border-l border-[#70645e]" />
      </div>
    </footer>
  );
}

export default function App() {
  return (
    <div className="flex h-screen flex-col overflow-hidden bg-[#efefef] font-['Open_Sans','Noto_Sans',sans-serif]">
      <TitleBar />
      <MenuBar />
      <Toolbar />
      <Timeframes />
      <Chart />
      <ChartTabs />
      <Toolbox />
      <StatusBar />
      <Taskbar />
    </div>
  );
}
